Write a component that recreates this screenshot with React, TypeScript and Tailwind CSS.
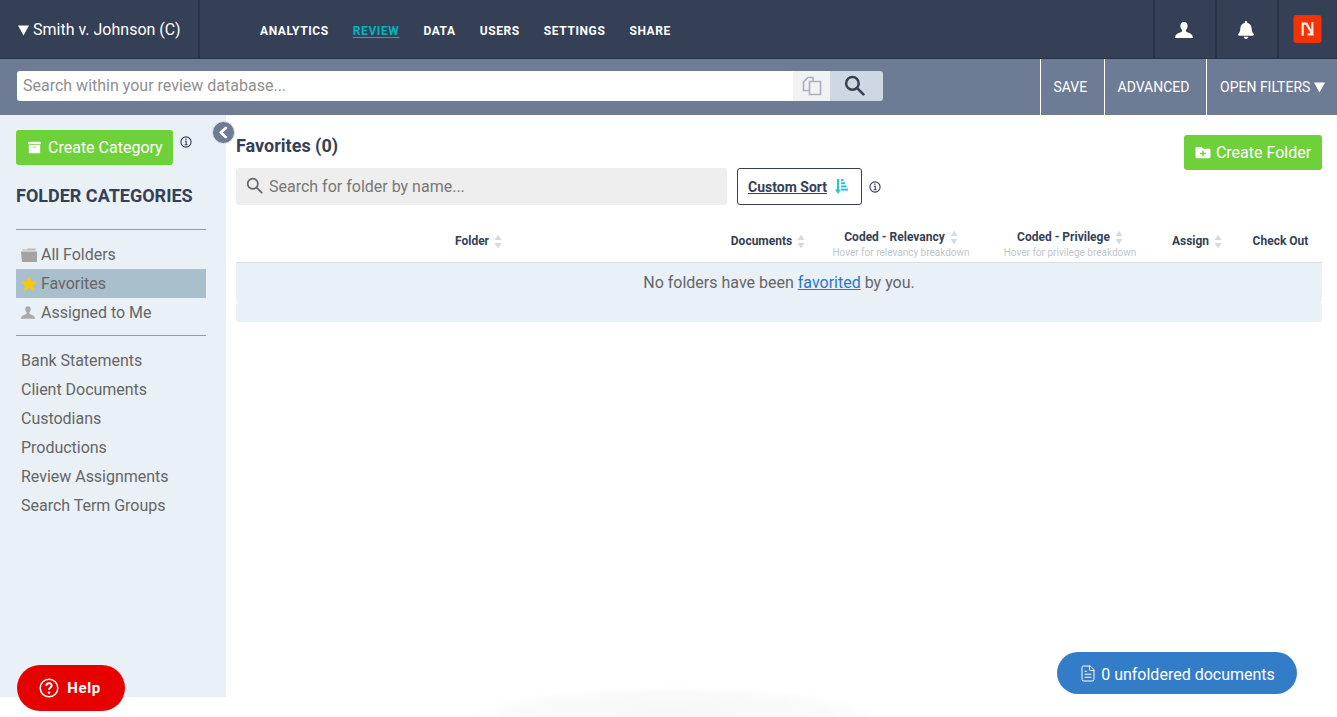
import React from "react";
import { FaArchive, FaFolderPlus, FaBell } from "react-icons/fa";
import { FileText } from "lucide-react";

const Info = ({ className = "" }: { className?: string }) => (
  <svg viewBox="0 0 12 12" className={className} fill="none" stroke="#353f55">
    <circle cx="6" cy="6" r="5.100" strokeWidth="1.100" />
    <path d="M4.900 5.200H6.200V8.700M4.700 8.800H7.500" strokeWidth="1.100" />
    <path d="M5.400 3.300H6.500" strokeWidth="1.400" />
  </svg>
);

const Person = ({ className = "", fill = "#fff" }: { className?: string; fill?: string }) => (
  <svg viewBox="0 0 18 16" className={className} fill={fill}>
    <path d="M9 0C6.800 0 5.400 1.600 5.400 3.900c0 1.700.8 3.200 1.700 4.100.3.500.2 1.200-.2 1.600C5.200 10.900 1.200 11.600.3 14.200c-.2.700-.3 1.300-.3 1.800h18c0-.5-.1-1.100-.3-1.800-.9-2.600-4.900-3.300-6.600-4.600-.4-.4-.5-1.100-.2-1.600.9-.9 1.700-2.400 1.700-4.100C12.600 1.600 11.200 0 9 0z" />
  </svg>
);

const Magnifier = ({ className = "", color = "#353f55", w = 2 }: { className?: string; color?: string; w?: number }) => (
  <svg viewBox="0 0 20 20" className={className} fill="none" stroke={color} strokeWidth={w} strokeLinecap="round">
    <circle cx="8" cy="8" r="6" />
    <path d="M12.500 12.500L18.500 18.500" />
  </svg>
);

const Sort = () => (
  <svg viewBox="0 0 8 15" className="w-[8px] h-[15px]">
    <path d="M4 0.500L7.500 6H0.500Z" fill="#d3dce6" />
    <path d="M4 14.500L0.500 9H7.500Z" fill="#d3dce6" />
  </svg>
);

const Th = ({ label, sub, sort = true }: { label: string; sub?: string; sort?: boolean }) => (
  <div className={`flex flex-col items-center justify-center ${sub ? "pt-[6px]" : ""}`}>
    <div className="flex items-center gap-[5px] text-[12px] leading-[15px] font-bold text-[#353f55]">
      <span>{label}</span>
      {sort && <Sort />}
    </div>
    {sub && <div className="text-[10px] leading-[13px] mt-[1px] text-[#c2c6cb]">{sub}</div>}
  </div>
);

const Row = ({ icon, label, active = false }: { icon?: React.ReactNode; label: string; active?: boolean }) => (
  <div className={`h-[29px] flex items-center pl-[5px] text-[16px] tracking-[-0.02px] text-[#666] ${active ? "bg-[#a9bfcc]" : ""}`}>
    {icon && <span className="w-[20px] flex items-center shrink-0">{icon}</span>}
    <span>{label}</span>
  </div>
);

const NavLink = ({ label, active = false }: { label: string; active?: boolean }) => (
  <span className={`text-[12px] font-bold tracking-[0.6px] ${active ? "text-[#00b5c0] underline underline-offset-2" : "text-white"}`}>{label}</span>
);

const BarButton = ({ children, w, pl }: { children: React.ReactNode; w: string; pl: string }) => (
  <div className={`${w} ${pl} h-full border-l border-white flex items-center text-[14px] text-white pt-[1px]`}>{children}</div>
);

export default function App() {
  return (
    <div className="relative h-[717px] overflow-hidden bg-white font-['Roboto',sans-serif]">
      <div className="h-[697px] flex flex-col">
        <header className="h-[59px] shrink-0 bg-[#353f55] border-b border-[#2a3245] flex items-stretch">
          <div className="w-[200px] border-r-2 border-[#2a3245] flex items-center pl-[18px] pt-[2px] text-[16px] text-white">
            <svg viewBox="0 0 11 11" className="w-[11px] h-[11px] mr-[4px]" fill="#fff">
              <path d="M0 0.500H11L5.500 10.500Z" />
            </svg>
            <span>Smith v. Johnson (C)</span>
          </div>
          <nav className="flex-1 flex items-center gap-[24px] pl-[60px] pt-[3px]">
            <NavLink label="ANALYTICS" />
            <NavLink label="REVIEW" active />
            <NavLink label="DATA" />
            <NavLink label="USERS" />
            <NavLink label="SETTINGS" />
            <NavLink label="SHARE" />
          </nav>
          <div className="w-[62px] border-l-2 border-[#2a3245] flex items-center justify-center pr-[2px] pt-[1px]">
            <Person className="w-[18px] h-[16px]" />
          </div>
          <div className="w-[62px] border-l-2 border-[#2a3245] flex items-center justify-center pr-[2px] pt-[1px]">
            <FaBell className="text-white w-[18px] h-[18px]" />
          </div>
          <div className="w-[60px] border-l-2 border-[#2a3245] flex items-center pl-[15px]">
            <svg viewBox="0 0 30 30" className="w-[29px] h-[30px] -ml-[1px]">
              <rect x="0.500" y="0.500" width="29" height="29" rx="3" fill="#f43208" />
              <path d="M10 22V9.500H14L20 20.500H15M20 8V21" fill="none" stroke="#fff" strokeOpacity="0.9" strokeWidth="2.300" />
            </svg>
          </div>
        </header>

        <div className="h-[56px] shrink-0 bg-[#6e7b95] flex items-stretch">
          <div className="flex-1 flex items-center pl-[17px] pb-[2px]">
            <div className="w-[866px] h-[30px] flex rounded-[3px] overflow-hidden">
              <div className="flex-1 bg-white flex items-center pl-[6px] text-[16px] text-[#8f8f8f]">Search within your review database...</div>
              <div className="w-[37px] bg-[#f0f2f4] flex items-center justify-center">
                <svg viewBox="0 0 20 20" className="w-[20px] h-[20px]" fill="none" stroke="#a9b2c0" strokeWidth="1.700">
                  <path d="M8 14.500H1.500V6L6 1.500H11V5" />
                  <path d="M7.500 5.500H18.500V18.500H7.500Z" fill="#f0f2f4" />
                </svg>
              </div>
              <div className="w-[53px] bg-[#ced8e4] flex items-center justify-center pr-[4px] pb-[2px]">
                <Magnifier className="w-[21px] h-[21px]" w={2.400} />
              </div>
            </div>
          </div>
          <BarButton w="w-[64px]" pl="pl-[12.5px]">SAVE</BarButton>
          <BarButton w="w-[102px]" pl="pl-[12.5px]">ADVANCED</BarButton>
          <BarButton w="w-[131px]" pl="pl-[13px]">
            <span>OPEN FILTERS</span>
            <svg viewBox="0 0 11 11" className="w-[11px] h-[11px] ml-[4px]" fill="#fff">
              <path d="M0 0.500H11L5.500 10.500Z" />
            </svg>
          </BarButton>
        </div>

        <div className="flex-1 flex min-h-0">
          <aside className="relative w-[226px] shrink-0 bg-[#e9f0f6] pl-[16px] pr-[20px] pt-[15px]">
            <div className="flex items-start">
              <div className="w-[157px] h-[35px] rounded-[3px] bg-[#6fd13a] flex items-center pl-[12px] text-[16px] text-white">
                <FaArchive className="w-[13px] h-[13px] mr-[7px]" />
                <span>Create Category</span>
              </div>
              <Info className="w-[12px] h-[12px] ml-[7px] mt-[6px]" />
            </div>
            <h2 className="mt-[20px] text-[18px] leading-[22px] font-bold text-[#353f55]">FOLDER CATEGORIES</h2>
            <div className="mt-[22px] border-t border-[#999]" />
            <div className="mt-[10px]">
              <Row
                icon={
                  <svg viewBox="0 0 16 14" className="w-[16px] h-[14px]" fill="#a3a3a3">
                    <path d="M1 1.500H6L7 0.500H14.500V2.500H1Z" fillOpacity="0.7" />
                    <path d="M0 3.500H16V14H1Z" />
                  </svg>
                }
                label="All Folders"
              />
              <Row
                icon={
                  <svg viewBox="0 0 16 15" className="w-[16px] h-[15px]" fill="#fdc800">
                    <path d="M8 0L10.300 5.200L16 5.800L11.700 9.500L12.900 15L8 12.100L3.100 15L4.300 9.500L0 5.800L5.700 5.200Z" />
                  </svg>
                }
                label="Favorites"
                active
              />
              <Row icon={<Person className="w-[14px] h-[13px]" fill="#aaa" />} label="Assigned to Me" />
            </div>
            <div className="mt-[8px] border-t border-[#999]" />
            <div className="mt-[10px]">
              <Row label="Bank Statements" />
              <Row label="Client Documents" />
              <Row label="Custodians" />
              <Row label="Productions" />
              <Row label="Review Assignments" />
              <Row label="Search Term Groups" />
            </div>
            <div className="absolute left-[212px] top-[6px] w-[23px] h-[23px] rounded-full bg-[#6e7b95] border border-[#dfe5ee] flex items-center justify-center">
              <svg viewBox="0 0 12 14" className="w-[11px] h-[13px]" fill="none" stroke="#fff" strokeWidth="3" strokeLinecap="round" strokeLinejoin="round">
                <path d="M8.500 2L3 7L8.500 12" />
              </svg>
            </div>
          </aside>

          <main className="flex-1 min-w-0 pl-[10px] pr-[15px]">
            <div className="h-[105px] flex justify-between">
              <div>
                <h1 className="mt-[20px] text-[18px] leading-[22px] font-bold text-[#353f55]">Favorites (0)</h1>
                <div className="mt-[11px] flex items-center">
                  <div className="w-[491px] h-[37px] rounded-[3px] bg-[#eeeeee] flex items-center pl-[10px] text-[16px] text-[#777]">
                    <Magnifier className="w-[17px] h-[17px] mr-[6px] -mt-[2px]" color="#666" w={2} />
                    <span>Search for folder by name...</span>
                  </div>
                  <div className="ml-[10px] w-[125px] h-[37px] rounded-[3px] border border-[#353f55] flex items-center pl-[10px] pt-[1px] text-[14px] font-bold text-[#353f55]">
                    <span className="underline">Custom Sort</span>
                    <svg viewBox="0 0 14 15" className="w-[14px] h-[15px] ml-[7px] -mt-[2px]" fill="#1fcad6">
                      <path d="M3 0H5V10.500H7L4 15L1 10.500H3Z" />
                      <rect x="7" y="0" width="2.500" height="2" />
                      <rect x="7" y="3.200" width="4" height="2" />
                      <rect x="7" y="6.400" width="5.500" height="2" />
                      <rect x="7" y="9.600" width="7" height="2" />
                    </svg>
                  </div>
                  <Info className="w-[12px] h-[12px] ml-[7px]" />
                </div>
              </div>
              <div className="mt-[20px] w-[138px] h-[35px] rounded-[3px] bg-[#6fd13a] flex items-center justify-center text-[16px] text-white">
                <FaFolderPlus className="w-[16px] h-[15px] mr-[5px]" />
                <span>Create Folder</span>
              </div>
            </div>
            <div className="h-[43px] grid grid-cols-[485px_94px_172px_166px_88px_79px] border-b border-[#dcdfe2]">
              <Th label="Folder" />
              <Th label="Documents" />
              <Th label="Coded - Relevancy" sub="Hover for relevancy breakdown" />
              <Th label="Coded - Privilege" sub="Hover for privilege breakdown" />
              <Th label="Assign" />
              <Th label="Check Out" sort={false} />
            </div>
            <div className="h-[39px] rounded-b-[3px] bg-[#e9f0f6] flex items-center justify-center text-[16px] text-[#666]">
              <span>No folders have been <span className="text-[#2b78c5] underline">favorited</span> by you.</span>
            </div>
            <div className="h-[20px] rounded-[3px] bg-[#e9f0f6]" />
          </main>
        </div>
      </div>

      <div className="absolute left-[470px] top-[686px] w-[410px] h-[60px] rounded-[50%] bg-[radial-gradient(closest-side,#f7f7f8,#fafafb_75%,#ffffff)]" />

      <div className="absolute left-[17px] top-[665px] w-[108px] h-[46px] rounded-[23px] bg-[#e60000] flex items-center justify-center text-[15px] font-bold text-white tracking-[0.6px] pr-[2px]">
        <svg viewBox="0 0 20 20" className="w-[20px] h-[20px] mr-[8px]" fill="none" stroke="#fff" strokeWidth="1.600">
          <circle cx="10" cy="10" r="8.800" />
          <path d="M7.300 7.800C7.300 6.200 8.500 5.200 10 5.200C11.600 5.200 12.700 6.200 12.700 7.600C12.700 9.600 10 9.600 10 12" strokeWidth="1.900" />
          <circle cx="10" cy="14.600" r="1.200" fill="#fff" stroke="none" />
        </svg>
        <span>Help</span>
      </div>

      <div className="absolute left-[1057px] top-[652px] w-[240px] h-[42px] rounded-[21px] bg-[#337dc8] flex items-center justify-center pt-[4px] text-[16px] text-white">
        <FileText className="w-[18px] h-[19px] mr-[4px] -mt-[4px]" strokeWidth={1.300} />
        <span>0 unfoldered documents</span>
      </div>
    </div>
  );
}
